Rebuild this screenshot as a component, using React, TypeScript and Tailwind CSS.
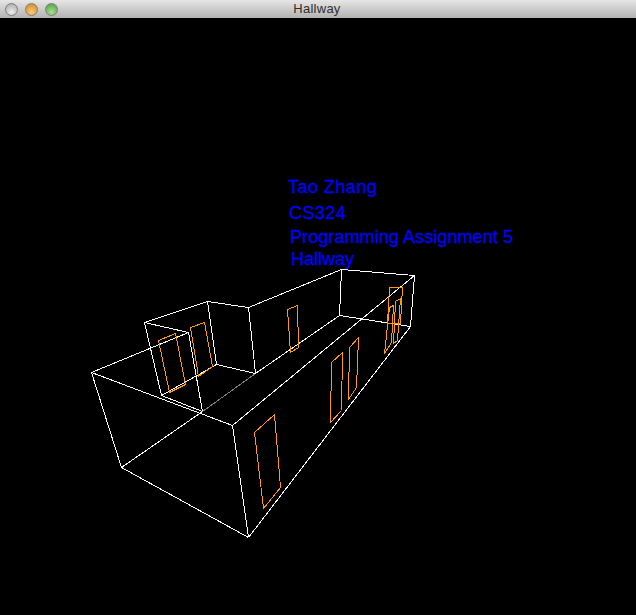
const white: [number, number, number, number][] = [
  [91, 372, 121, 467],
  [91, 372, 232, 425],
  [91, 372, 188, 332],
  [121, 467, 248, 537],
  [121, 467, 202, 411],
  [232, 425, 248, 537],
  [232, 425, 414, 275],
  [248, 537, 410, 326],
  [144, 322, 207, 301],
  [144, 322, 188, 332],
  [144, 322, 161, 395],
  [188, 332, 202, 411],
  [161, 395, 202, 411],
  [207, 301, 248, 307],
  [207, 301, 216, 364],
  [161, 395, 216, 364],
  [216, 364, 255, 373],
  [248, 307, 255, 373],
  [248, 307, 341, 269],
  [341, 269, 414, 275],
  [341, 269, 339, 315],
  [414, 275, 410, 326],
  [339, 315, 410, 326],
  [339, 315, 255, 373],
]

const doors = [
  "158,340 175,333 185,384 169,392",
  "190,327 204,322 212,366 198,376",
  "287,309 297,305 298,347 290,352",
  "331,362 342,352 341,410 330,422",
  "349,347 358,337 356,387 348,399",
  "254,432 274,414 280,487 263,508",
  "389,287 402,287 400,323 387,323",
  "389,307 393,305 391,342 384,353",
  "395,301 400,298 397,340 393,343",
]

const labels = [
  { text: "Tao Zhang", className: "left-[288px] top-[177px] tracking-[0.45px]" },
  { text: "CS324", className: "left-[289px] top-[203px] tracking-[0.4px]" },
  { text: "Programming Assignment 5", className: "left-[290px] top-[227px] tracking-[0.08px]" },
  { text: "Hallway", className: "left-[291px] top-[249px]" },
]

function TrafficLight({ color }: { color: string }) {
  return <div className={`h-[13px] w-[13px] rounded-full border border-[#7d7d7d] ${color}`} />
}

export default function App() {
  return (
    <div className="flex h-[615px] w-[636px] flex-col overflow-hidden bg-black font-['Liberation_Sans',sans-serif]">
      <div className="relative flex h-[18px] shrink-0 items-center bg-gradient-to-b from-[#e6e6e6] to-[#b2b2b2] pl-[5px]">
        <div className="flex gap-[7px]">
          <TrafficLight color="bg-[radial-gradient(circle_at_50%_75%,#ececec,#a4a4a4)]" />
          <TrafficLight color="bg-[radial-gradient(circle_at_50%_75%,#fcc878,#d08420)]" />
          <TrafficLight color="bg-[radial-gradient(circle_at_50%_75%,#a8e090,#4a9a3a)]" />
        </div>
        <span className="absolute inset-x-0 pr-[2px] text-center text-[13px] tracking-[0.25px] text-[#2e2e2e]">Hallway</span>
      </div>
      <div className="relative grow">
        <svg className="absolute left-0 top-[-18px]" width="636" height="615" fill="none" shapeRendering="crispEdges">
          <g transform="translate(0.5 0.5)">
            {white.map(([x1, y1, x2, y2], i) => (
              <line key={i} x1={x1} y1={y1} x2={x2} y2={y2} stroke="#ffffff" />
            ))}
            <line x1="202" y1="411" x2="255" y2="373" stroke="#808080" />
            {doors.map((points, i) => (
              <polygon key={i} points={points} stroke="#ff9c00" />
            ))}
          </g>
        </svg>
        <div className="absolute left-0 top-[-18px]">
          {labels.map((l) => (
            <span key={l.text} className={`absolute whitespace-nowrap text-[18px] leading-[20px] text-[#0000ff] [-webkit-text-stroke:0.3px_#0000ff] ${l.className}`}>
              {l.text}
            </span>
          ))}
        </div>
      </div>
    </div>
  )
}
